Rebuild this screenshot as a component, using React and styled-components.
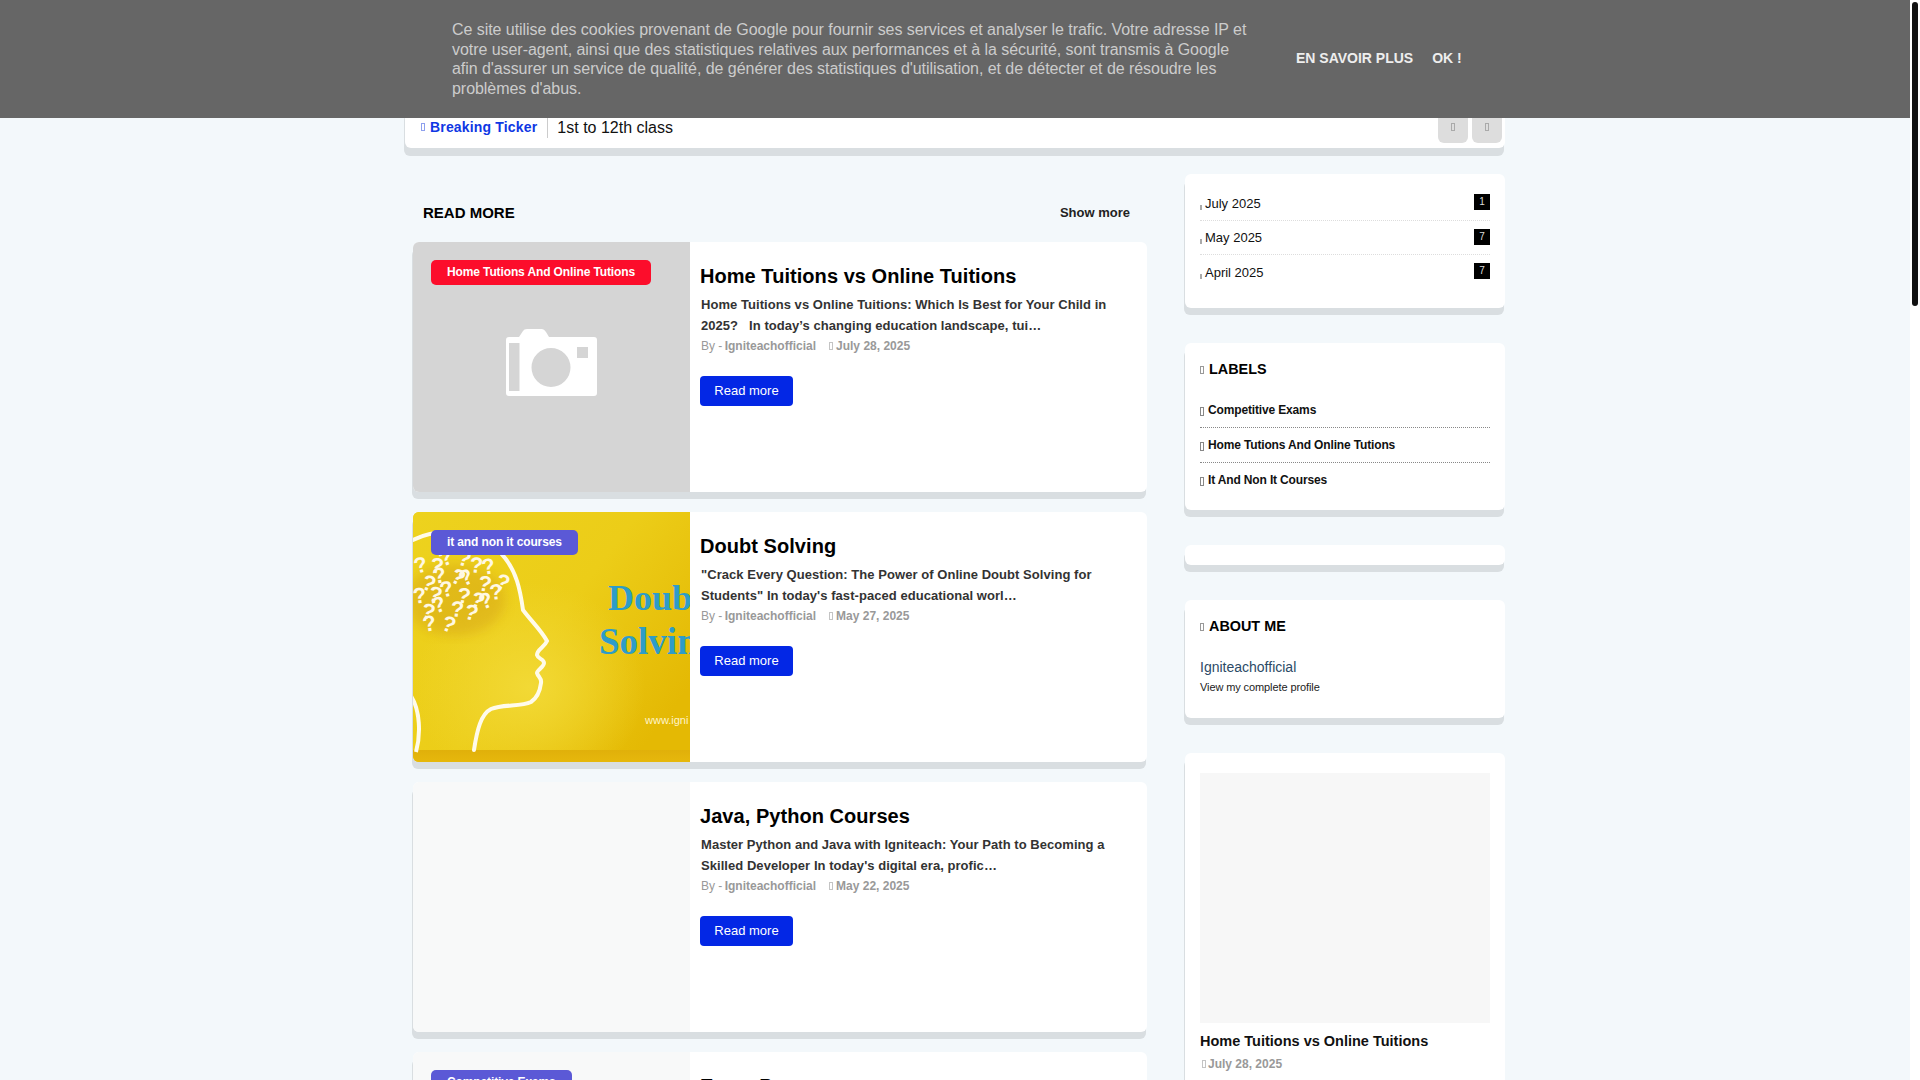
import React from "react";
import styled, { createGlobalStyle } from "styled-components";

const Global = createGlobalStyle`
  html, body { margin: 0; padding: 0; height: 100%; overflow: hidden; }
  body { font-family: "Liberation Sans", Arial, sans-serif; background: #f3f8fb; color: #111; }
  * { box-sizing: border-box; }
`;

const Viewport = styled.div`
  width: 1910px;
  height: 100vh;
  overflow: hidden;
  background: #f3f8fb;
`;

const ScrollTrack = styled.div`
  position: fixed;
  top: 0;
  right: 0;
  width: 10px;
  height: 100vh;
  background: #fff;
  z-index: 11;
`;
const ScrollThumb = styled.div`
  width: 6px;
  height: 304px;
  margin: 2px 2px 0;
  background: #111;
  border-radius: 3px;
`;

const Page = styled.div`
  width: 1100px;
  margin: 0 auto;
  padding-top: 106px;
`;

const CookieBar = styled.div`
  position: fixed;
  top: 0;
  left: 0;
  right: 10px;
  height: 118px;
  background: #666;
  display: flex;
  align-items: center;
  padding-left: 452px;
  z-index: 10;
`;
const CookieText = styled.p`
  margin: 0;
  width: 800px;
  font-size: 16px;
  line-height: 19.5px;
  letter-spacing: -0.05px;
  color: #ccc;
`;
const CookieButton = styled.span`
  font-size: 14px;
  font-weight: 700;
  color: #eee;
  margin: 0 0 2px ${(p) => p.$gap}px;
`;

/* Empty rectangle standing in for an icon-font glyph that failed to load */
const Tofu = styled.span`
  display: inline-block;
  flex: none;
  width: ${(p) => p.$w || 4}px;
  height: ${(p) => p.$h || 8}px;
  border: 1px solid ${(p) => p.$color || "#aaa"};
  background: ${(p) => (p.$filled ? p.$color : "transparent")};
  margin-right: ${(p) => p.$gap ?? 0}px;
  vertical-align: ${(p) => p.$va || 0}px;
`;

const Ticker = styled.div`
  height: 42px;
  background: #fff;
  border-radius: 6px;
  box-shadow: -1px 8px 0 #d9dee1;
  display: flex;
  align-items: flex-start;
  padding: 0 3px 0 16px;
`;
const TickerLabel = styled.div`
  height: 32px;
  padding: 10px 10px 0 0;
  display: flex;
  align-items: center;
  font-size: 14px;
  font-weight: 700;
  letter-spacing: 0.17px;
  color: #0f37e4;
  border-right: 1px solid #ccc;
`;
const TickerText = styled.div`
  flex: 1;
  font-size: 16px;
  line-height: 22px;
  padding: 11px 0 0 9px;
  color: #111;
`;
const NavButton = styled.div`
  width: 30px;
  height: 37px;
  margin-left: 4px;
  padding-top: 5px;
  background: #ddd;
  border-radius: 0 0 6px 6px;
  display: flex;
  align-items: center;
  justify-content: center;
`;

const Columns = styled.div`
  display: flex;
  align-items: flex-start;
  margin-top: 26px;
`;
const Main = styled.main`
  width: 742px;
  padding-left: 8px;
`;
const Sidebar = styled.aside`
  width: 320px;
  margin-left: 38px;
  display: flex;
  flex-direction: column;
  gap: 35px;
`;

const MainHead = styled.div`
  display: flex;
  justify-content: space-between;
  align-items: center;
  height: 68px;
  padding: 16px 17px 8px 10px;
`;
const HeadTitle = styled.h2`
  margin: 0;
  font-size: 15px;
  font-weight: 700;
  color: #000;
`;
const ShowMore = styled.span`
  font-size: 13px;
  font-weight: 700;
  color: #222;
`;

const PostCard = styled.article`
  display: flex;
  width: 734px;
  height: 250px;
  margin-bottom: 20px;
  background: #fff;
  border-radius: 6px;
  box-shadow: -1px 7px 0 #d9dee1;
`;
const Thumb = styled.div`
  position: relative;
  flex: 0 0 277px;
  height: 250px;
  background: ${(p) => p.$bg};
  border-radius: 6px 0 0 6px;
  overflow: hidden;
  display: flex;
  align-items: center;
  justify-content: center;
`;
const CameraSvg = styled.svg`
  display: block;
  margin-bottom: 9px;
`;
const ArtSvg = styled.svg`
  display: block;
  flex: none;
`;
const Badge = styled.span`
  position: absolute;
  top: 18px;
  left: 18px;
  height: 25px;
  padding: 0 16px;
  border-radius: 5px;
  background: ${(p) => p.$bg};
  color: #fff;
  font-size: 12px;
  font-weight: 700;
  line-height: 25px;
  letter-spacing: -0.12px;
  white-space: nowrap;
`;
const PostBody = styled.div`
  flex: 1;
  padding: 22px 10px 0;
`;
const PostTitle = styled.h3`
  margin: 0;
  font-size: 20px;
  line-height: 24px;
  font-weight: 700;
  letter-spacing: 0.05px;
  color: #000;
`;
const Excerpt = styled.p`
  margin: 6px 0 0 1px;
  font-size: 13px;
  font-weight: 700;
  line-height: 21px;
  letter-spacing: 0.05px;
  color: #333;
`;
const Meta = styled.div`
  margin: 2px 0 0 1px;
  font-size: 12px;
  line-height: 16px;
  color: #999;
`;
const MetaAuthor = styled.b`
  font-weight: 700;
  margin: 0 13px 0 -1px;
`;
const MetaDate = styled.b`
  font-weight: 700;
`;
const ReadMore = styled.div`
  margin-top: 22px;
  width: 93px;
  height: 30px;
  border-radius: 4px;
  background: #0327e5;
  color: #fff;
  font-size: 13px;
  line-height: 30px;
  text-align: center;
`;

const Widget = styled.section`
  width: 320px;
  background: #fff;
  border-radius: 6px;
  box-shadow: -1px 7px 0 #d9dee1;
  padding: ${(p) => p.$pad || "0 15px"};
  height: ${(p) => p.$h}px;
`;
const ArchiveRow = styled.div`
  height: 34px;
  display: flex;
  align-items: center;
  justify-content: space-between;
  border-bottom: ${(p) => (p.$last ? "none" : "1px dotted #ddd")};
`;
const ArchiveName = styled.span`
  font-size: 13px;
  color: #111;
`;
const Count = styled.span`
  width: 16px;
  height: 16px;
  margin-bottom: ${(p) => p.$mb}px;
  background: #000;
  color: #ddd;
  font-size: 10px;
  line-height: 15px;
  text-align: center;
`;
const WidgetTitle = styled.h2`
  margin: 0;
  font-size: 14.4px;
  line-height: 18px;
  font-weight: 700;
  color: #000;
`;
const LabelRow = styled.div`
  height: 35px;
  line-height: 34px;
  font-size: 12px;
  font-weight: 700;
  letter-spacing: -0.15px;
  color: #111;
  border-bottom: ${(p) => (p.$last ? "none" : "1px dotted #888")};
`;
const Labels = styled.div`
  margin-top: 15px;
`;
const ProfileName = styled.div`
  margin-top: 23px;
  font-size: 14px;
  line-height: 18px;
  color: #2c4a66;
`;
const ProfileLink = styled.div`
  margin-top: 4px;
  font-size: 11px;
  line-height: 14px;
  letter-spacing: -0.1px;
  color: #222;
`;
const PopularImage = styled.div`
  width: 290px;
  height: 250px;
  background: #f7f7f7;
`;
const PopularTitle = styled.div`
  margin-top: 9px;
  font-size: 14.5px;
  line-height: 18px;
  font-weight: 700;
  color: #111;
`;
const PopularDate = styled.div`
  margin-top: 6px;
  padding-left: 2px;
  font-size: 12px;
  line-height: 16px;
  font-weight: 700;
  color: #999;
`;

function CameraIcon() {
  return (
    <CameraSvg width="91" height="67" viewBox="0 0 91 67">
      <path
        fillRule="evenodd"
        fill="#fff"
        d="M3 8H13L17 2Q18 0 21 0H36Q38 0 40 3L43 8H88Q91 8 91 11V64Q91 67 88 67H3Q0 67 0 64V11Q0 8 3 8ZM3 14V62H13.500V14ZM71 18V29H82V18ZM45 19A19.500 19.500 0 1 0 45 58A19.500 19.500 0 1 0 45 19Z"
      />
    </CameraSvg>
  );
}

const MARKS = [
  [3, 62, -15], [16, 60, 10], [29, 55, -20], [43, 52, 15], [56, 60, 5], [70, 63, -10], [81, 75, 20],
  [7, 76, 20], [21, 72, -10], [36, 69, 25], [50, 75, -25], [64, 78, 10], [77, 88, -5],
  [1, 92, -8], [14, 88, 15], [29, 86, -15], [43, 90, 10], [56, 93, 20], [69, 98, -20],
  [7, 105, 15], [22, 102, -20], [37, 104, 5], [50, 106, 15], [11, 120, -10], [27, 117, 20],
];

function DoubtImage() {
  return (
    <ArtSvg width="277" height="250" viewBox="0 0 277 250">
      <defs>
        <linearGradient id="bgY" x1="0" y1="0" x2="1" y2="0.7">
          <stop offset="0" stopColor="#edd21e" />
          <stop offset="0.55" stopColor="#eccd18" />
          <stop offset="1" stopColor="#e4b904" />
        </linearGradient>
        <radialGradient id="glow" cx="0.42" cy="0.7" r="0.42">
          <stop offset="0" stopColor="#f2d935" />
          <stop offset="1" stopColor="#f2d935" stopOpacity="0" />
        </radialGradient>
        <linearGradient id="floor" x1="0" y1="0" x2="0" y2="1">
          <stop offset="0" stopColor="#e0b00a" />
          <stop offset="1" stopColor="#e6b80c" />
        </linearGradient>
        <filter id="soft"><feGaussianBlur stdDeviation="6" /></filter>
      </defs>
      <rect width="277" height="250" fill="url(#bgY)" />
      <rect width="277" height="250" fill="url(#glow)" />
      <rect y="238" width="277" height="12" fill="url(#floor)" />
      <ellipse cx="42" cy="88" rx="50" ry="36" fill="#d09a12" opacity="0.4" filter="url(#soft)" />
      <path
        d="M0 28C12 22 22 20 34 20C60 20 80 30 92 46C103 60 107 76 110 98C119 110 128 118 134 129C131 136 124 137 124 143C125 147 131 147 131 151C131 155 124 158 124 161C125 165 129 166 128 171C127 179 124 186 118 190C108 195 90 192 78 197C68 202 64 218 61 238"
        fill="none"
        stroke="#fffbea"
        strokeWidth="4"
        strokeLinecap="round"
      />
      <path d="M-2 184C7 198 8 222 3 240" fill="none" stroke="#fffbea" strokeWidth="4" />
      {MARKS.map(([x, y, r], i) => (
        <text
          key={i}
          x={x}
          y={y}
          transform={`rotate(${r} ${x} ${y})`}
          fontFamily="Liberation Sans, sans-serif"
          fontWeight="700"
          fontSize="22"
          fill="#fff8e4"
        >
          ?
        </text>
      ))}
      <text x="195" y="98" fontFamily="Liberation Serif, serif" fontWeight="700" fontSize="36" fill="#2e9cc8">Doub</text>
      <text x="186" y="142" fontFamily="Liberation Serif, serif" fontWeight="700" fontSize="37" fill="#2e9cc8">Solvin</text>
      <text x="232" y="212" fontFamily="Liberation Sans, sans-serif" fontSize="11" fill="#fff3c8">www.igni</text>
    </ArtSvg>
  );
}

const POSTS = [
  {
    badge: "Home Tutions And Online Tutions",
    badgeBg: "#fc0d2b",
    bg: "#d5d5d5",
    thumb: <CameraIcon />,
    title: "Home Tuitions vs Online Tuitions",
    excerpt: "Home Tuitions vs Online Tuitions: Which Is Best for Your Child in 2025?\u00a0\u00a0\u00a0In today\u2019s changing education landscape, tui\u2026",
    date: "July 28, 2025",
  },
  {
    badge: "it and non it courses",
    badgeBg: "#5b59d6",
    bg: "#edd022",
    thumb: <DoubtImage />,
    title: "Doubt Solving",
    excerpt: "\"Crack Every Question: The Power of Online Doubt Solving for Students\" In today's fast-paced educational worl\u2026",
    date: "May 27, 2025",
  },
  {
    bg: "#f8f9f9",
    title: "Java, Python Courses",
    excerpt: "Master Python and Java with Igniteach: Your Path to Becoming a Skilled Developer In today's digital era, profic\u2026",
    date: "May 22, 2025",
  },
  {
    badge: "Competitive Exams",
    badgeBg: "#5b59d6",
    bg: "#f8f9f9",
    title: "Exam Prep",
    excerpt: "",
    date: "",
  },
];

function PostItem({ post }) {
  return (
    <PostCard>
      <Thumb $bg={post.bg}>
        {post.thumb}
        {post.badge && <Badge $bg={post.badgeBg}>{post.badge}</Badge>}
      </Thumb>
      <PostBody>
        <PostTitle>{post.title}</PostTitle>
        {post.date && (
          <>
            <Excerpt>{post.excerpt}</Excerpt>
            <Meta>
              By - <MetaAuthor>Igniteachofficial</MetaAuthor>
              <Tofu $color="#c4c4c4" $gap={3} />
              <MetaDate>{post.date}</MetaDate>
            </Meta>
            <ReadMore>Read more</ReadMore>
          </>
        )}
      </PostBody>
    </PostCard>
  );
}

const ARCHIVE = [["July 2025", 1, 3], ["May 2025", 7, 2], ["April 2025", 7, 2]];

export default function App() {
  return (
    <Viewport>
      <Global />
      <CookieBar>
        <CookieText>
          Ce site utilise des cookies provenant de Google pour fournir ses services et analyser le trafic. Votre adresse IP et
          votre user-agent, ainsi que des statistiques relatives aux performances et à la sécurité, sont transmis à Google
          afin d'assurer un service de qualité, de générer des statistiques d'utilisation, et de détecter et de résoudre les
          problèmes d'abus.
        </CookieText>
        <CookieButton $gap={44}>EN SAVOIR PLUS</CookieButton>
        <CookieButton $gap={19}>OK !</CookieButton>
      </CookieBar>
      <ScrollTrack><ScrollThumb /></ScrollTrack>
      <Page>
        <Ticker>
          <TickerLabel>
            <Tofu $color="#8ea0ee" $gap={5} />
            Breaking Ticker
          </TickerLabel>
          <TickerText>1st to 12th class</TickerText>
          <NavButton><Tofu $color="#aaa" /></NavButton>
          <NavButton><Tofu $color="#aaa" /></NavButton>
        </Ticker>
        <Columns>
          <Main>
            <MainHead>
              <HeadTitle>READ MORE</HeadTitle>
              <ShowMore>Show more</ShowMore>
            </MainHead>
            {POSTS.map((p) => (
              <PostItem key={p.title} post={p} />
            ))}
          </Main>
          <Sidebar>
            <Widget $h={134} $pad="13px 15px 0">
              {ARCHIVE.map(([name, n, mb], i) => (
                <ArchiveRow key={name} $last={i === 2}>
                  <ArchiveName><Tofu $w={2} $h={5} $color="#aaa" $filled $gap={3} $va={-2} />{name}</ArchiveName>
                  <Count $mb={mb}>{n}</Count>
                </ArchiveRow>
              ))}
            </Widget>
            <Widget $h={167} $pad="17px 15px 0">
              <WidgetTitle><Tofu $color="#999" $gap={5} />LABELS</WidgetTitle>
              <Labels>
                {["Competitive Exams", "Home Tutions And Online Tutions", "It And Non It Courses"].map((l, i) => (
                  <LabelRow key={l} $last={i === 2}><Tofu $h={9} $color="#888" $gap={4} $va={-2} />{l}</LabelRow>
                ))}
              </Labels>
            </Widget>
            <Widget $h={20} />
            <Widget $h={118} $pad="17px 15px 0">
              <WidgetTitle><Tofu $color="#999" $gap={5} />ABOUT ME</WidgetTitle>
              <ProfileName>Igniteachofficial</ProfileName>
              <ProfileLink>View my complete profile</ProfileLink>
            </Widget>
            <Widget $h={420} $pad="20px 15px 0">
              <PopularImage />
              <PopularTitle>Home Tuitions vs Online Tuitions</PopularTitle>
              <PopularDate><Tofu $color="#c4c4c4" $gap={2} />July 28, 2025</PopularDate>
            </Widget>
          </Sidebar>
        </Columns>
      </Page>
    </Viewport>
  );
}
